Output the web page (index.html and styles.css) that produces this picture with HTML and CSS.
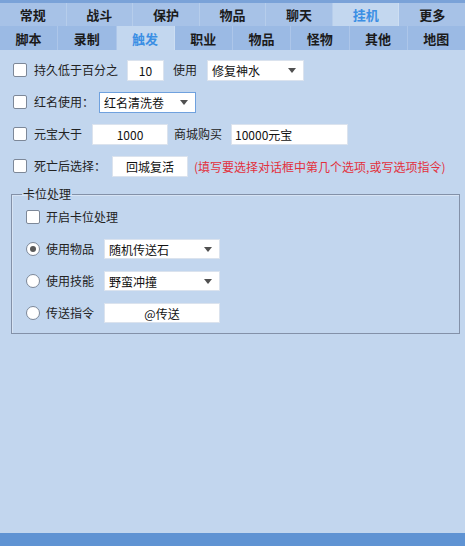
FILE: index.html
```html
<!DOCTYPE html>
<html lang="zh">
<head>
<meta charset="utf-8">
<title>挂机 - 触发</title>
<link rel="stylesheet" href="styles.css">
</head>
<body>
<div class="app">
  <div class="strip"></div>
  <div class="tabs tabs-main">
    <div class="tab">常规</div>
    <div class="tab">战斗</div>
    <div class="tab">保护</div>
    <div class="tab">物品</div>
    <div class="tab">聊天</div>
    <div class="tab active">挂机</div>
    <div class="tab">更多</div>
  </div>
  <div class="tabs tabs-sub">
    <div class="tab">脚本</div>
    <div class="tab">录制</div>
    <div class="tab active">触发</div>
    <div class="tab">职业</div>
    <div class="tab">物品</div>
    <div class="tab">怪物</div>
    <div class="tab">其他</div>
    <div class="tab">地图</div>
  </div>
  <div class="content">
    <div class="rows">
      <div class="row">
        <span class="check"></span>
        <span class="label l1">持久低于百分之</span>
        <span class="field center w37 m9">10</span>
        <span class="label m9">使用</span>
        <span class="select w97 m10">修复神水<i class="arrow"></i></span>
      </div>
      <div class="row">
        <span class="check"></span>
        <span class="label l1">红名使用：</span>
        <span class="select focus w97 m5">红名清洗卷<i class="arrow"></i></span>
      </div>
      <div class="row">
        <span class="check"></span>
        <span class="label l1">元宝大于</span>
        <span class="field center w76 m10">1000</span>
        <span class="label m6">商城购买</span>
        <span class="field w117 m9">10000元宝</span>
      </div>
      <div class="row">
        <span class="check"></span>
        <span class="label l1">死亡后选择：</span>
        <span class="field center w76 m6">回城复活</span>
        <span class="hint">(填写要选择对话框中第几个选项,或写选项指令)</span>
      </div>
    </div>
    <fieldset class="group">
      <legend>卡位处理</legend>
      <div class="group-rows">
        <div class="row">
          <span class="check"></span>
          <span class="label l2">开启卡位处理</span>
        </div>
        <div class="row">
          <span class="radio on"></span>
          <span class="label l2">使用物品</span>
          <span class="select w116 m10">随机传送石<i class="arrow"></i></span>
        </div>
        <div class="row">
          <span class="radio"></span>
          <span class="label l2">使用技能</span>
          <span class="select w116 m10">野蛮冲撞<i class="arrow"></i></span>
        </div>
        <div class="row">
          <span class="radio"></span>
          <span class="label l2">传送指令</span>
          <span class="field center w116 m10">@传送</span>
        </div>
      </div>
    </fieldset>
  </div>
  <div class="footer"></div>
</div>
</body>
</html>
```

FILE: styles.css
```css
* { box-sizing: border-box; }
html, body { margin: 0; padding: 0; }
body {
  width: 465px;
  height: 546px;
  overflow: hidden;
  font-family: "Noto Sans CJK SC", "Microsoft YaHei", sans-serif;
  font-size: 12px;
  color: #222;
  background: #c2d6ee;
}
.app {
  height: 546px;
  display: flex;
  flex-direction: column;
}
.strip {
  height: 3px;
  background: #7aa2d8;
}
.tabs {
  display: flex;
}
.tabs-main { height: 23px; background: #a7c2e7; }
.tabs-sub { height: 24px; background: #9bbae4; }
.tab {
  flex: 1 1 0;
  display: flex;
  align-items: center;
  justify-content: center;
  font-weight: bold;
  font-size: 13px;
  color: #1b1b1b;
  border-right: 1px solid rgba(255, 255, 255, 0.18);
}
.tab:last-child { border-right: none; }
.tab.active {
  background: #c3d7ef;
  color: #3b8fe4;
}
.content {
  flex: 1 1 auto;
  background: #c2d6ee;
}
.rows {
  padding: 9px 0 0 13px;
  display: flex;
  flex-direction: column;
  gap: 10px;
}
.row {
  height: 22px;
  display: flex;
  align-items: center;
}
.check {
  width: 14px;
  height: 14px;
  flex: none;
  background: #fff;
  border: 1px solid #7d8898;
  border-radius: 2px;
}
.radio {
  width: 14px;
  height: 14px;
  flex: none;
  background: #fff;
  border: 1px solid #7d8898;
  border-radius: 50%;
  display: flex;
  align-items: center;
  justify-content: center;
}
.radio.on::after {
  content: "";
  width: 6px;
  height: 6px;
  border-radius: 50%;
  background: #5a5a5a;
}
.label { white-space: nowrap; line-height: 16px; }
.l1 { margin-left: 7px; }
.l2 { margin-left: 6px; }
.m5 { margin-left: 5px; }
.m6 { margin-left: 6px; }
.m9 { margin-left: 9px; }
.m10 { margin-left: 10px; }
.w37 { width: 37px; }
.w76 { width: 76px; }
.w97 { width: 97px; }
.w116 { width: 116px; }
.w117 { width: 117px; }
.field {
  height: 21px;
  flex: none;
  background: #fff;
  border: 1px solid #dbe3ee;
  display: flex;
  align-items: center;
  padding: 0 3px;
  color: #111;
  white-space: nowrap;
}
.field.center { justify-content: center; }
.select {
  height: 21px;
  flex: none;
  background: #fff;
  border: 1px solid #dbe3ee;
  display: flex;
  align-items: center;
  padding: 0 4px;
  color: #111;
  white-space: nowrap;
}
.select.focus { border-color: #6fa1de; }
.arrow {
  margin-left: auto;
  margin-right: 3px;
  width: 0;
  height: 0;
  border-left: 4px solid transparent;
  border-right: 4px solid transparent;
  border-top: 5px solid #505050;
}
.hint {
  margin-left: 6px;
  color: #e3303c;
  white-space: nowrap;
}
.group {
  margin: 9px 5px 0 11px;
  padding: 0 0 10px 14px;
  border: 1px solid #8391a8;
  box-shadow: inset 1px 1px 0 rgba(255, 255, 255, 0.35);
  min-width: 0;
}
.group legend {
  margin-left: -4px;
  padding: 0 1px;
  line-height: 16px;
  color: #222;
}
.group-rows {
  padding-top: 5px;
  display: flex;
  flex-direction: column;
  gap: 12px;
}
.group-rows .row { height: 20px; }
.group-rows .field, .group-rows .select { height: 20px; }
.footer {
  height: 13px;
  flex: none;
  background: #5f93d3;
}
```
